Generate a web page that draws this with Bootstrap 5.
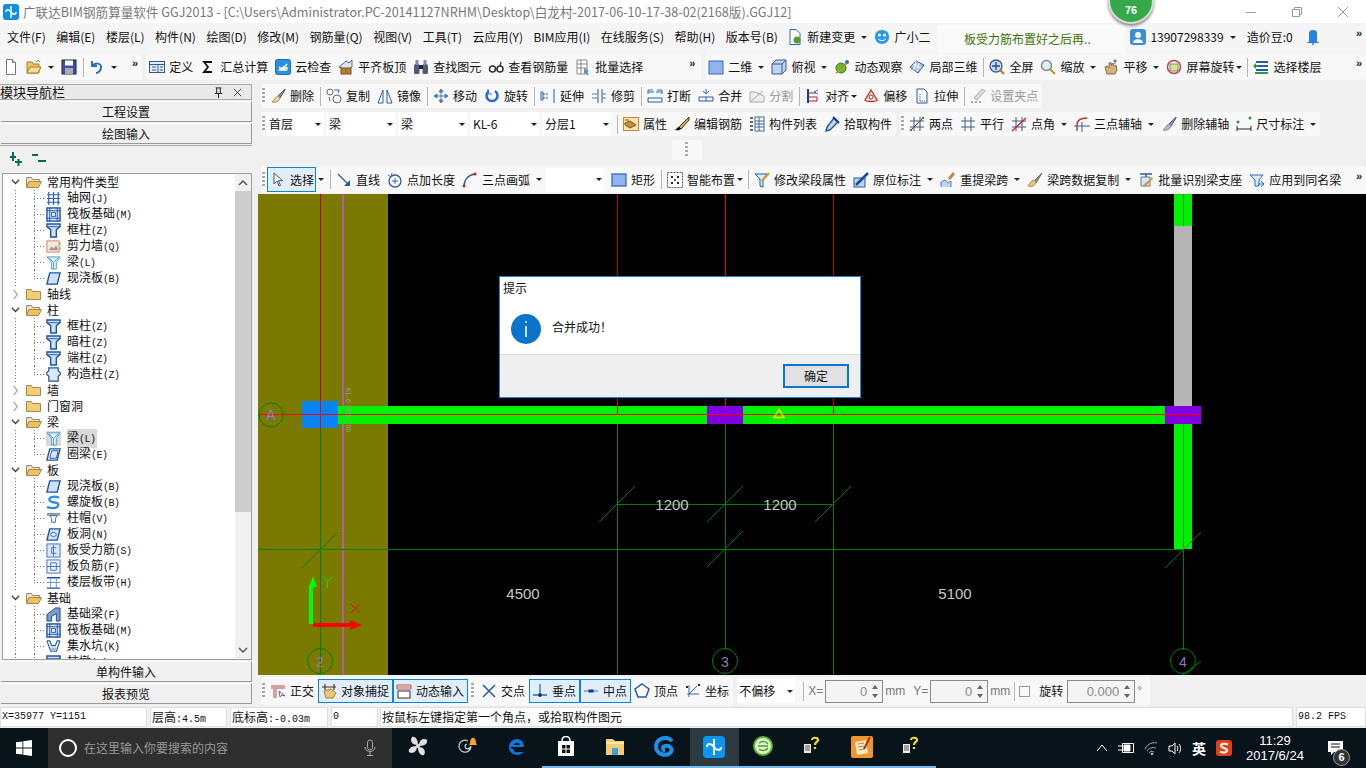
<!DOCTYPE html>
<html lang="zh-CN">
<head>
<meta charset="UTF-8" />
<title>广联达BIM钢筋算量软件 GGJ2013</title>
<link href="https://cdn.jsdelivr.net/npm/bootstrap@5.3.0/dist/css/bootstrap.min.css" rel="stylesheet" />
<style>
  html, body { height: 768px; overflow: hidden; }
  body { background: #f0f0f0; color: #111; font: 12px/16px "Noto Sans CJK SC", sans-serif; }
  svg { display: block; flex: none; }
  .app-title { height: 23px; background: #fff; color: #777; font-size: 12.6px; white-space: nowrap; }
  .app-title .logo { margin: 0 4px 0 3px; }
  .win-ctl { width: 46px; }
  .score-ball { position: absolute; left: 1108px; top: -22px; width: 46px; height: 46px; border-radius: 50%; background: #35a94a; border: 2px solid #d8dcd8; box-shadow: 0 2px 3px #888; color: #fff; font: bold 11px/14px "Liberation Sans", sans-serif; text-align: center; padding-top: 23px; }
  .menu-row { height: 31px; background: #f5f5f5; padding: 0 0 3px 7px; }
  .menu-row .mi { margin-right: 10.5px; white-space: nowrap; }
  .menu-row .mi.tail { margin-right: 6.5px; }
  .msg-box { width: 188px; height: 28px; background: #fafafa; border-radius: 3px 3px 0 0; color: #3f7206; text-align: center; line-height: 28px; margin: 3px 2px 0 3px; padding-right: 8px; }
  .tbar { background: #f8f8f8; border-radius: 3px; display: flex; align-items: center; white-space: nowrap; }
  .tb-item { display: flex; align-items: center; gap: 4px; padding: 0 4px 0 3px; height: 24px; }
  .tb-off { color: #999; }
  .tb-on { background: #e1eefa; outline: 1px solid #0a84d8; outline-offset: -1px; height: 25px; padding: 0 2px 0 3px; }
  .tb-caret { width: 0; height: 0; border: 3px solid transparent; border-top: 3px solid #222; border-bottom: 0; margin: 0 4px 0 2px; flex: none; }
  .tb-caret.snug { margin-left: -2px; margin-right: 3px; }
  .tb-sep { width: 1px; height: 19px; background: #b5b5b5; margin: 0 2px; flex: none; }
  .tb-grip { width: 3px; height: 16px; margin: 0 2px 0 1px; flex: none; background: repeating-linear-gradient(to bottom, #a8a8a8 0 2px, transparent 2px 4px); }
  .tb-grip.wide { margin: 0 4px 0 3px; }
  .tb-more { color: #222; font: bold 11px/12px "Liberation Sans", sans-serif; margin-top: -8px; }
  .tb-more.near { margin-left: 11px; margin-right: 4px; }
  .tb-more.far { margin-left: 42px; margin-right: 6px; }
  .row-top { height: 30px; }
  .row-top .tbar { height: 26px; }
  .pick { height: 24px; background: #fff; display: flex; align-items: center; justify-content: space-between; padding: 0 2px; }
  .pick.w56 { width: 56px; } .pick.w68 { width: 68px; } .pick.w58 { width: 58px; }
  .side { width: 258px; flex: none; padding-right: 6px; }
  .side-head { height: 16px; background: #e9e9e9; border: 1px solid #a9a9a9; border-left: 0; line-height: 14px; font-size: 13px; margin-bottom: 1px; }
  .side-btn { height: 21px; line-height: 19px; margin: 0 0 1px 1px; border: 0; border-top: 1px solid #fff; border-bottom: 1px solid #999; border-right: 1px solid #999; border-radius: 0; background: #f0f0f0; padding: 0; font-size: 12px; color: #111; text-align: center; }
  .side-tools { height: 28px; background: #f0f0f0; border-top: 1px solid #aaa; padding: 5px 0 0 7px; }
  .tree-box { height: 487px; margin: 0 0 1px 2px; background: #fff; border: 1px solid #a0a0a0; overflow: hidden; }
  .tree-list { width: 232px; overflow: hidden; }
  .node { height: 16px; display: flex; align-items: center; white-space: nowrap; background-repeat: no-repeat; }
  .node.dad { padding-left: 7px; }
  .node.kid { padding-left: 43px;
    background-image: repeating-linear-gradient(to bottom, #777 0 1px, transparent 1px 3px), repeating-linear-gradient(to bottom, #777 0 1px, transparent 1px 3px), repeating-linear-gradient(to right, #777 0 1px, transparent 1px 3px);
    background-size: 1px 100%, 1px 100%, 11px 1px; background-position: 12px 0, 31px 0, 31px 8px; }
  .node.kid.end { background-size: 1px 100%, 1px 8px, 11px 1px; }
  .node .name { margin-left: 6px; padding-right: 2px; }
  .node.dad .name { margin-left: 5px; }
  .node.sel .name { background: #d9d9d9; }
  .node.sel svg { background: #d9d9d9; }
  .node .code { font: 10px/16px "Liberation Mono", monospace; letter-spacing: -.55px; }
  .chev { width: 11px; margin-right: 1px; }
  .tree-scroll { width: 16px; background: #f0f0f0; height: 100%; }
  .scroll-up { height: 17px; }
  .scroll-thumb { height: 321px; background: #cdcdcd; }
  .scroll-gap { height: 131px; }
  .scroll-down { height: 14px; }
  .draw-side { flex: 1; min-width: 0; }
  .strip { padding-left: 3px; }
  .handle-box { width: 30px; height: 20px; background: #f8f8f8; margin-left: 414px; display: flex; justify-content: center; align-items: center; border-radius: 3px; }
  .draw-strip { height: 28px; margin-top: 6px; padding-left: 3px; }
  .draw-strip .tbar { height: 27px; }
  .cad { width: 1108px; height: 481px; background: #000; position: relative; }
  .cad text { font-family: "Liberation Sans", sans-serif; }
  .tip-box { position: absolute; left: 241px; top: 82px; width: 362px; height: 122px; background: #fff; border: 1px solid #1a82d8; }
  .tip-title { padding: 3px 3px 0; height: 26px; }
  .tip-body { height: 51px; padding-left: 11px; gap: 11px; }
  .tip-text { margin-bottom: 4px; }
  .tip-foot { height: 43px; background: #efefef; border-top: 1px solid #dcdcdc; padding: 9px 11px 0 0; }
  .tip-ok { width: 66px; height: 24px; background: #e1e1e1; border: 2px solid #0a78d0; border-radius: 0; padding: 0; font-size: 12px; line-height: 18px; color: #111; }
  .snap-bar { height: 31px; padding-left: 3px; }
  .snap-bar .tbar { height: 28px; margin-top: 2px; }
  .snap-bar .tb-on { height: 24px; padding: 0 4px 0 3px; }
  .field { width: 58px; height: 23px; border: 1px solid #8a8a8a; background: #f4f4f4; color: #8a8a8a; text-align: right; display: flex; justify-content: flex-end; align-items: center; gap: 4px; padding-right: 4px; margin: 0 2px; font: 13px "Liberation Sans", sans-serif; }
  .field.wide { width: 68px; margin-left: 4px; }
  .field svg { margin-left: 1px; }
  .unit { color: #777; font-family: "Liberation Sans", sans-serif; font-size: 12px; }
  .tick-box { width: 11px; height: 11px; border: 1px solid #999; margin: 0 9px 0 0; }
  .state-bar { height: 22px; padding: 1px 0; font: 10px/18px "Liberation Mono", monospace; gap: 3px; white-space: nowrap; }
  .cell { background: #fff; border: 1px solid #ddd; padding-left: 1px; height: 20px; overflow: hidden; flex: none; }
  .cell.wa { width: 147px; } .cell.wb { width: 77px; } .cell.wc { width: 98px; } .cell.wd { width: 47px; } .cell.we { width: 70px; }
  .cell.hanzi { font: 12px/18px "Noto Sans CJK SC", sans-serif; padding-left: 1px; flex: 1; margin-left: -1px; }
  .han { font: 12px/18px "Noto Sans CJK SC", sans-serif; }
  .task-bar { height: 40px; background: #08131a; color: #fff; position: relative; }
  .start-btn { width: 48px; }
  .find-box { width: 344px; height: 100%; background: #2f2f2f; color: #999; padding-left: 11px; font-size: 12px; gap: 7px; }
  .task-row { padding-left: 2px; }
  .task-ico { width: 49.3px; height: 100%; display: flex; align-items: center; justify-content: center; border-bottom: 2px solid transparent; }
  .task-ico.open { border-bottom-color: #76b9ed; }
  .task-ico.now { background: #2d3a42; border-bottom-color: #76b9ed; }
  .tray { color: #fff; gap: 10px; margin-right: 8px; }
  .tray-char { font-size: 14px; font-weight: 700; }
  .clock { text-align: center; width: 70px; font: 13px/15px "Liberation Sans", sans-serif; margin-right: 17px; }
  .note-slot { width: 39px; }
  .note-mark { position: absolute; right: 16px; bottom: 2px; width: 17px; height: 17px; border-radius: 50%; background: #333; color: #fff; font: bold 11px/15px "Liberation Sans", sans-serif; text-align: center; border: 1px solid #999; }
</style>
</head>
<body>
<div class="position-relative overflow-hidden">
  <div class="app-title d-flex align-items-center">
    <span id="logoSlot" class="logo"></span>
    <span class="flex-grow-1">广联达BIM钢筋算量软件 GGJ2013 - [C:\Users\Administrator.PC-20141127NRHM\Desktop\白龙村-2017-06-10-17-38-02(2168版).GGJ12]</span>
    <span class="win-ctl d-flex justify-content-center"><svg width="10" height="10" viewBox="0 0 10 10"><path d="M0 5.5h10" stroke="#999"/></svg></span>
    <span class="win-ctl d-flex justify-content-center"><svg width="10" height="10" viewBox="0 0 10 10"><path d="M.5 2.5h7v7h-7zM2.5 2.5v-2h7v7h-2" fill="none" stroke="#999"/></svg></span>
    <span class="win-ctl d-flex justify-content-center"><svg width="10" height="10" viewBox="0 0 10 10"><path d="M0 0l10 10M10 0L0 10" stroke="#999"/></svg></span>
  </div>
  <div class="score-ball">76</div>

  <div id="menuRow" class="menu-row d-flex align-items-center"></div>
  <div id="topRow" class="row-top d-flex"></div>

  <div class="d-flex">
    <div class="side">
      <div class="side-head d-flex justify-content-between align-items-center"><span>模块导航栏</span><span class="d-flex gap-2 pe-2" id="pinSlot"></span></div>
      <div class="d-grid">
        <button class="side-btn">工程设置</button>
        <button class="side-btn">绘图输入</button>
      </div>
      <div class="side-tools d-flex gap-2" id="plusSlot"></div>
      <div class="tree-box d-flex">
        <div class="tree-list" id="tree"></div>
        <div class="tree-scroll">
          <div class="scroll-up d-flex justify-content-center align-items-center" id="upSlot"></div>
          <div class="scroll-thumb"></div>
          <div class="scroll-gap"></div>
          <div class="scroll-down d-flex justify-content-center align-items-center" id="downSlot"></div>
        </div>
      </div>
      <div class="d-grid">
        <button class="side-btn">单构件输入</button>
        <button class="side-btn">报表预览</button>
      </div>
    </div>

    <div class="draw-side">
      <div class="strip d-flex"><div class="tbar" id="rowEdit"></div></div>
      <div class="strip d-flex gap-1 mt-1"><div class="tbar" id="rowPick"></div><div class="tbar" id="rowAxis"></div></div>
      <div class="handle-box mt-1"><span class="tb-grip"></span></div>
      <div class="draw-strip d-flex"><div class="tbar flex-grow-1" id="rowDraw"></div></div>
      <div class="cad">
        <svg width="1108" height="481" viewBox="258 194 1108 481" shape-rendering="crispEdges">
          <rect x="258" y="194" width="130" height="481" fill="#7a7a00"/>
          <rect x="1174" y="194" width="18" height="355" fill="#00f000"/>
          <rect x="1174" y="226" width="18" height="180" fill="#b4b4b4"/>
          <path d="M1183 194v32" stroke="#008000"/>
          <path d="M342.5 194v481" stroke="#b060a0" stroke-width="2"/>
          <rect x="338" y="406" width="840" height="18" fill="#00f000"/>
          <path d="M320.5 194V414M617.5 194V414M833.5 194V414" stroke="#c00000"/>
          <path d="M725.5 194V414" stroke="#f00000"/>
          <path d="M320.5 414V675M617.5 424V675M725.5 424V650M833.5 424V675M1183.5 424V650M258 549.5H1183M617 504.5H833" stroke="#008000" fill="none"/>
          <rect x="302" y="401" width="36" height="27" fill="#0a84f0"/>
          <rect x="707" y="406" width="36" height="18" fill="#8000e0"/>
          <rect x="1165" y="406" width="36" height="18" fill="#8000e0"/>
          <path d="M258 414.5H1201" stroke="#ff0000"/>
          <path d="M320.5 401V428" stroke="#ff0000"/>
          <g shape-rendering="auto" stroke="#008000" fill="none">
            <path d="M599 522l36-36M707 522l36-36M815 522l36-36M302 568l36-36M707 567l36-36M1165 568l36-36M1183 675l18-14"/>
            <circle cx="271" cy="415" r="12"/>
            <circle cx="320" cy="661" r="12.5"/>
            <circle cx="725" cy="661" r="12.5"/>
            <circle cx="1183" cy="661" r="12.5"/>
            <path d="M774 417.5l5-8 5 8z" stroke="#f0f000" stroke-width="1.5"/>
            <path d="M351 604l9 9M360 604l-9 9" stroke="#f00000"/>
            <path d="M323 577l4.500 4 4.500-4M327.500 581v7" stroke="#00f000"/>
          </g>
          <path d="M311 624V586" stroke="#00ff00" stroke-width="4"/>
          <path d="M313 576l-4 11h8z" fill="#00ff00" shape-rendering="auto"/>
          <path d="M313 625h38" stroke="#ff0000" stroke-width="4"/>
          <path d="M350 620l12 5-12 5z" fill="#ff0000" shape-rendering="auto"/>
          <g shape-rendering="auto" fill="#a8a8b8" text-anchor="middle" font-size="14">
            <text x="271" y="420" fill="#8a80d0">A</text>
            <text x="320" y="667" fill="#8a80b0">2</text>
            <text x="725" y="667" fill="#8a80b0">3</text>
            <text x="1183" y="667" fill="#8a80b0">4</text>
          </g>
          <g shape-rendering="auto" fill="#c8c8c8" text-anchor="middle" font-size="15">
            <text x="672" y="510">1200</text>
            <text x="780" y="510">1200</text>
            <text x="523" y="599">4500</text>
            <text x="955" y="599">5100</text>
          </g>
          <text x="346" y="388" transform="rotate(90 346 388)" font-size="7" fill="#9a9a9a" shape-rendering="auto">KL-6 300×700</text>
        </svg>
        <div class="tip-box">
          <div class="tip-title">提示</div>
          <div class="tip-body d-flex align-items-center">
            <svg width="30" height="30" viewBox="0 0 30 30"><circle cx="15" cy="15" r="15" fill="#0a74cc"/><path d="M15 7v1.800M15 12v11" stroke="#fff" stroke-width="1.600"/></svg>
            <span class="tip-text">合并成功！</span>
          </div>
          <div class="tip-foot d-flex justify-content-end"><button class="btn tip-ok">确定</button></div>
        </div>
      </div>
      <div class="snap-bar d-flex gap-1"><div class="tbar" id="rowSnap"></div><div class="tbar" id="rowCoord"></div></div>
    </div>
  </div>

  <div class="state-bar d-flex">
    <div class="cell wa">X=35977 Y=1151</div>
    <div class="cell wb"><span class="han">层高</span>:4.5m</div>
    <div class="cell wc"><span class="han">底标高</span>:-0.03m</div>
    <div class="cell wd">0</div>
    <div class="cell hanzi">按鼠标左键指定第一个角点，或拾取构件图元</div>
    <div class="cell we">98.2 FPS</div>
  </div>

  <div class="task-bar d-flex align-items-center">
    <div class="start-btn d-flex justify-content-center"><svg width="16" height="16" viewBox="0 0 16 16" fill="#fff"><path d="M0 2.300l6.500-.9v6.200H0zM7.300 1.300L16 0v7.600H7.300zM0 8.400h6.500v6.200L0 13.700zM7.300 8.400H16V16l-8.700-1.300z"/></svg></div>
    <div class="find-box d-flex align-items-center">
      <svg width="18" height="18" viewBox="0 0 18 18"><circle cx="9" cy="9" r="8" fill="none" stroke="#fff" stroke-width="2"/></svg>
      <span class="flex-grow-1">在这里输入你要搜索的内容</span>
      <svg class="me-3" width="12" height="18" viewBox="0 0 12 18" fill="none" stroke="#aaa"><rect x="3.500" y="1" width="5" height="10" rx="2.500"/><path d="M1 8c0 6 10 6 10 0M6 13v3M3 16.500h6"/></svg>
    </div>
    <div class="task-row d-flex h-100 flex-grow-1" id="taskIcons"></div>
    <div class="tray d-flex align-items-center" id="trayIcons"></div>
    <div class="clock">11:29<br>2017/6/24</div>
    <div class="note-slot h-100 d-flex align-items-center">
      <svg width="18" height="18" viewBox="0 0 18 18"><path d="M1 2h15v11H7l-3 3v-3H1z" fill="#fff"/><path d="M4 5h9M4 8h9" stroke="#08131a"/></svg>
    </div>
    <div class="note-mark">6</div>
  </div>
</div>

<script>
  // icon drawings, all on a 16x16 box
  const brush = (c) => `<path d="M15 1L8 8l2 2 5-8z" fill="#8a8ad0" stroke="#556"/><path d="M8 8c-3 1-3 4-6 6 4 1 7-1 8-4z" fill="${c}" stroke="#a86"/>`;
  const colT = `<path d="M1 1h14v3l-4 3v8H5V7L1 4z" fill="#cfe0f7" stroke="#1c55a8" stroke-width="1.500"/><path d="M1 4h14" stroke="#1c55a8"/>`;
  const slab = `<path d="M4 2h11l-3 12H1z" fill="#cfe0f7" stroke="#1c55a8" stroke-width="1.500"/>`;
  const grid = `<path d="M3 1v14M8 1v14M13 1v14M1 4h14M1 8h14M1 12h14" stroke="#2a62b8" stroke-width="1.300" fill="none"/>`;
  const raft = `<rect x="1" y="1" width="14" height="14" fill="#dbe8fa" stroke="#1c55a8" stroke-width="1.500"/><path d="M4 1v14M12 1v14M1 4h14M1 12h14" stroke="#1c55a8"/><rect x="6" y="6" width="4" height="4" fill="#fff" stroke="#1c55a8"/>`;
  const icons = {
    logo: `<rect width="16" height="16" rx="3" fill="#0a8ee8"/><path d="M8 2v12M3 8c0-3 3-3 5 0s5 3 5 0" stroke="#fff" fill="none" stroke-width="1.500"/>`,
    doc: `<path d="M3.500.5h6l3 3v12h-9z" fill="#fff" stroke="#777"/><path d="M9.500.5v3h3" fill="#ddd" stroke="#777"/>`,
    open: `<path d="M1 14V3h5l1 2h6v9z" fill="#e8c46a" stroke="#a87d20"/><path d="M1 14l3-6h11l-3 6z" fill="#f5dc94" stroke="#a87d20"/><path d="M10 3c1-2 3-2 4 0" stroke="#3a70c0" fill="none"/>`,
    save: `<rect x="1" y="1" width="14" height="14" fill="#3d4ea8" stroke="#223"/><rect x="4" y="1.500" width="8" height="5" fill="#fff"/><rect x="4" y="9" width="8" height="6" fill="#aab"/>`,
    undo: `<path d="M3 2v5h5M3.500 7C6 3 13 4 12 9c-.5 3-3 5-5 5" fill="none" stroke="#2a6ac8" stroke-width="2"/>`,
    form: `<rect x=".5" y="2.500" width="15" height="11" fill="#e4eefb" stroke="#2a5a9a"/><path d="M1 5.500h14M9 6v7M3 8h4M3 11h4M11 8h3M11 11h3" stroke="#2a5a9a"/>`,
    sum: `<path d="M12 3H4l4 5-4 5h8" fill="none" stroke="#111" stroke-width="1.800"/>`,
    cloud: `<rect x=".5" y=".5" width="15" height="15" rx="2" fill="#2a90e0" stroke="#1a70c0"/><path d="M3 12c2-5 8-6 10-3l-1 3z" fill="#cfe7fb"/><path d="M4 8l3 3 5-6" fill="none" stroke="#fff" stroke-width="1.500"/>`,
    level: `<path d="M1 8l7-6 3 2 3-3v7l-5 3z" fill="#dbe4f2" stroke="#4a6a9a"/><rect x="3" y="9" width="10" height="6" fill="#c97a28" stroke="#8a4a10"/><path d="M8 9v6" stroke="#4a9a40" stroke-width="2"/>`,
    binoc: `<rect x="1" y="5" width="5.500" height="10" rx="1.500" fill="#4a5a80"/><rect x="9.500" y="5" width="5.500" height="10" rx="1.500" fill="#4a5a80"/><rect x="2.500" y="1" width="3" height="5" fill="#7c8cae"/><rect x="10.500" y="1" width="3" height="5" fill="#7c8cae"/><rect x="6" y="6" width="4" height="4" fill="#223"/>`,
    glass: `<circle cx="4.500" cy="10" r="3" fill="none" stroke="#333" stroke-width="1.500"/><circle cx="12" cy="10" r="3" fill="none" stroke="#333" stroke-width="1.500"/><path d="M7.500 10h1.500M12 7l1-4" stroke="#333" stroke-width="1.300"/>`,
    batch: `<path d="M2 1h10v14H2z" fill="#fff" stroke="#888"/><path d="M2 5h10M2 9h10M6 1v14" stroke="#888"/><path d="M9 9l5 3-2 1 2 3-2 0-1-2-2 1z" fill="#5a90d0"/>`,
    box2d: `<rect x="1" y="2" width="14" height="13" fill="#8fb4ee" stroke="#3a6ab8"/>`,
    cube: `<path d="M1 5l4-4h10v10l-4 4H1z" fill="#bcd4f2" stroke="#3a5a8a"/><path d="M1 5h10v10M11 5l4-4" fill="none" stroke="#3a5a8a"/>`,
    orb: `<circle cx="7" cy="9" r="5" fill="#6ab83a" stroke="#3a7a1a"/><path d="M2 14C5 12 11 7 14 2" stroke="#b8a020" stroke-width="2"/><circle cx="13" cy="3" r="2" fill="#3a70c0"/>`,
    part3: `<path d="M1 8l6-6 8 4-6 8z" fill="#a8c4ea" stroke="#3a5a8a"/><path d="M4 5l8 4M7 2l-2 9M10 4l-2 9" stroke="#fff"/>`,
    fit: `<circle cx="7" cy="7" r="6" fill="#c8daf2" stroke="#3a5a8a" stroke-width="1.300"/><path d="M7 3v8M3 7h8" stroke="#1a4a9a" stroke-width="1.300"/><path d="M11 11l4 4" stroke="#b87a10" stroke-width="2"/>`,
    zoom: `<circle cx="6.500" cy="6.500" r="5" fill="#e4ecf5" stroke="#7a8a9a" stroke-width="1.500"/><path d="M10 10l5 5" stroke="#b89a30" stroke-width="2.200"/>`,
    hand: `<path d="M4 15L2 8l2-1 2 2V4l2-.5.5 3L10 4l1 3 2-1 1 5-2 4z" fill="#d8b070" stroke="#866"/><path d="M12 0v5M10 2h4" stroke="#667"/>`,
    spin: `<circle cx="8" cy="8" r="6.500" fill="none" stroke="#d84030" stroke-width="1.500"/><rect x="4" y="5" width="8" height="7" fill="#d8e870" stroke="#5a90d0"/>`,
    floors: `<path d="M3 3h12M3 7h12M3 11h12" stroke="#2a5aa8" stroke-width="2"/><path d="M0 7l3-3v2h2v2H3v2z" fill="#2a9a40"/><path d="M2 14h13" stroke="#2a9a40" stroke-width="2"/>`,
    rub: brush("#e8d8a0"),
    copy: `<circle cx="4" cy="4" r="3" fill="none" stroke="#667"/><circle cx="11" cy="11" r="4" fill="none" stroke="#667"/><path d="M8 2h5l-1 3M3 9l1 4" stroke="#2a6ac8" fill="none"/>`,
    mirror: `<path d="M6 2L1 15h5zM10 2l5 13h-5z" fill="#fff" stroke="#2a5a9a"/>`,
    move: `<path d="M8 1v14M1 8h14M8 1L6 4h4zM8 15l-2-3h4zM1 8l3-2v4zM15 8l-3-2v4z" fill="#4a80b8" stroke="#4a80b8"/>`,
    turn: `<path d="M11 3a5.500 5.500 0 1 1-6 0" fill="none" stroke="#2a6ac8" stroke-width="2.500"/><path d="M4 1v5h4" fill="none" stroke="#2a6ac8"/>`,
    stretch: `<path d="M1 4h2v8H1zM14 1v14" stroke="#2a5a9a" fill="none"/><path d="M3 6h6M3 10h6" stroke="#2a5a9a" stroke-dasharray="2 1"/>`,
    trim: `<path d="M7 1v14M11 1v14" stroke="#2a5a9a"/><path d="M1 6h6M1 10h6M11 6h4M11 10h4" stroke="#778"/>`,
    cut: `<path d="M1 6V2h5M15 6V2h-5M1 4h6M9 4h6" stroke="#2a6ac8" fill="none"/><path d="M1 10h14v4H1z" fill="none" stroke="#2a5a9a"/>`,
    join: `<path d="M8 1v4M5 3l3 3 3-3" stroke="#2a6ac8" fill="none"/><path d="M1 9h14v4H1z" fill="none" stroke="#2a5a9a"/><path d="M8 9v4" stroke="#2a5a9a"/>`,
    split: `<path d="M1 14l13-11M1 14h14V8L6 4H1z" fill="#eee" stroke="#aaa"/>`,
    align: `<path d="M3 1v14" stroke="#1a3a9a" stroke-width="2"/><path d="M4 5h7M4 13h8v-4H4" stroke="#b02020" fill="none"/><path d="M13 2L9 4l4 2" stroke="#2a6ac8" fill="none"/>`,
    shift: `<path d="M8 2l6 10c0 2-12 2-12 0z" fill="#fbd8d0" stroke="#c83020" stroke-width="1.300"/><circle cx="8" cy="9" r="2" fill="#fff" stroke="#556"/>`,
    pull: `<path d="M3 1h7l3 3v11H3z" fill="#fff" stroke="#2a5a9a"/><path d="M6 6v7M6 13h5" stroke="#2a5a9a" stroke-dasharray="1 1"/>`,
    grip: `<path d="M12 1l3 2-8 9-3-2z" fill="#ddd" stroke="#aaa"/><path d="M1 14h2M5 14h2M9 14h2" stroke="#aaa" stroke-width="2"/>`,
    prop: `<rect x=".5" y="1.500" width="15" height="13" fill="#fbe2b8" stroke="#d8852a"/><path d="M2 4h4M2 7l5-2 6 4-6 3-5-3z" fill="#c89028" stroke="#7a5a20"/>`,
    edit: `<path d="M15 1L5 11l2 2L15 4z" fill="#e8b030" stroke="#333"/><path d="M1 14c2-2 3-3 4-3l2 2c-2 2-4 1-6 1z" fill="#111"/>`,
    list: `<path d="M1 2h3M1 6h3M1 10h3M1 14h3" stroke="#667" stroke-width="2"/><rect x="6" y="1" width="9" height="14" fill="#fff" stroke="#3a6a9a"/><path d="M6 5h9M6 8h9M6 11h9M10 1v14" stroke="#3a6a9a"/>`,
    dropper: `<path d="M10 2l4 4-8 8-4 1 1-4z" fill="#bcd6f4" stroke="#1a4a9a" stroke-width="1.300"/><path d="M9 1l6 6" stroke="#1a3a8a" stroke-width="2"/>`,
    twoPt: `<path d="M1 5h14M1 11h14M5 1v14M11 1v14" stroke="#3a5a8a"/><path d="M1 15L15 1" stroke="#b82020"/><circle cx="2" cy="14" r="1.300" fill="#2a9a40"/><circle cx="14" cy="2" r="1.300" fill="#2a9a40"/>`,
    para: `<path d="M1 5h14M1 11h14M5 1v14M11 1v14" stroke="#3a5a8a"/>`,
    ptAng: `<path d="M1 5h14M1 11h14M5 1v14M11 1v14" stroke="#3a5a8a"/><path d="M1 15L15 2" stroke="#d02020" stroke-width="1.300"/>`,
    arcAxis: `<path d="M3 15V9c0-5 4-7 10-7" fill="none" stroke="#d02020" stroke-width="1.300"/><path d="M0 10h16M8 6v10" stroke="#3a5a8a"/>`,
    delAxis: brush("#c8a8e0"),
    dim: `<circle cx="2" cy="6" r="1.500" fill="#2a9a40"/><circle cx="14" cy="2" r="1.500" fill="#2a9a40"/><path d="M1 10v5M15 10v5M1 13h14" stroke="#223"/>`,
    arrow: `<path d="M4 1v11l3-3 2 5 1.500-.6-2-4.800h4z" fill="#fff" stroke="#456"/>`,
    line: `<path d="M2 2l11 11" stroke="#2a5a9a" stroke-width="1.300"/><path d="M14 14H8l6-6z" fill="#2a5a9a"/>`,
    plusLen: `<circle cx="8" cy="9" r="6" fill="none" stroke="#3a5a8a" stroke-width="1.300"/><path d="M8 6v6M5 9h6" stroke="#2a6ac8"/><path d="M1 3l3 2 1-4" stroke="#2a6ac8" fill="none"/>`,
    arc3: `<path d="M2 15C2 8 6 3 13 2" fill="none" stroke="#2a5a9a" stroke-width="1.500"/><circle cx="2" cy="14" r="1.500" fill="#d02020"/><circle cx="13" cy="2" r="1.500" fill="#d02020"/>`,
    rect: `<rect x="1" y="2" width="14" height="12" fill="#8fb4ee" stroke="#3a6ab8" stroke-width="1.300"/>`,
    smart: `<rect x=".5" y=".5" width="15" height="15" fill="#fff" stroke="#555" stroke-dasharray="2 1"/><path d="M4 4h2v2H4zM10 4h2v2h-2zM4 10h2v2H4zM10 10h2v2h-2z" fill="#223"/><rect x="7" y="7" width="2" height="2" fill="#2a6ac8"/>`,
    beamEd: `<path d="M1 2h12l-4 5v8l-3-1V7z" fill="#dcebfb" stroke="#1a5aa8"/><path d="M15 1L8 9" stroke="#d0a020" stroke-width="2"/>`,
    inPlace: `<rect x="1" y="6" width="11" height="9" fill="#bcd4f0" stroke="#2a5a9a"/><path d="M15 1L5 11l-2 2" stroke="#1a4a9a" stroke-width="2.500"/>`,
    respan: `<path d="M1 15V10l4-2 3 3 3-2v6" fill="#bcd4f0" stroke="#5a80b0"/><path d="M14 1l-5 6" stroke="#b88a5a" stroke-width="3"/>`,
    copySpan: `<path d="M15 1L7 9l2 2z" fill="#999" stroke="#666"/><path d="M7 8c-3 1-4 3-6 6 4 1 7 0 8-4z" fill="#e8c868" stroke="#a86"/>`,
    detect: `<path d="M2 2h12M8 2v3" stroke="#2a5a9a" stroke-width="1.500"/><path d="M3 5h9v9H3z" fill="#dde8f6" stroke="#5a7a9a"/><path d="M5 13l9-8 1 2-8 8z" fill="#c8a050"/>`,
    sameName: `<path d="M1 3h13l-4 5v6H6V8z" fill="#dcebfb" stroke="#2a6ab8"/><path d="M9 12h6M12 9l3 3-3 3" fill="none" stroke="#2a6ab8"/>`,
    ortho: `<path d="M1 2h14v4H7v9H3V6H1z" fill="#d8a0a0"/><path d="M9 8l1 6 2-2 3 1z" fill="#fff" stroke="#667"/>`,
    snap: `<path d="M4 1v6M13 1v6" stroke="#a03020" stroke-width="1.300"/><path d="M1 4h14" stroke="#333"/><path d="M3 8l7-2 5 4-3 5-7 0z" fill="#e8c878" stroke="#a87d30"/>`,
    dyn: `<path d="M1 2h14v4H1z" fill="#fff" stroke="#b05050"/><path d="M1 4h14" stroke="#b05050"/><rect x="2" y="8" width="12" height="7" fill="#fff" stroke="#333"/>`,
    cross: `<path d="M2 2l12 12M14 2L2 14" stroke="#2a5a9a" stroke-width="1.500"/>`,
    perp: `<path d="M8 1v13M1 12h14" stroke="#2a6ab8" stroke-width="1.300"/><rect x="6.500" y="10.500" width="3" height="3" fill="#123"/>`,
    mid: `<path d="M1 8h14" stroke="#6a8ac8" stroke-width="1.300"/><rect x="5.500" y="6.500" width="5" height="3" fill="#123a8a"/>`,
    apex: `<path d="M8 1l7 5-3 8H4L1 6z" fill="#fff" stroke="#2a5a9a" stroke-width="1.500"/>`,
    axes: `<path d="M4 2v12M2 11h12M4 11l8-8" stroke="#2a6ab8" fill="none"/><path d="M1 3l2 2M3 3L1 5M13 1l2 2M15 1l-2 2" stroke="#223"/>`,
    tip: `<path d="M4 13V4a4 3 0 0 1 8 0v9h2v1H2v-1z" fill="#2a80e0"/><circle cx="8" cy="15" r="1" fill="#2a80e0"/>`,
    newCh: `<path d="M3 .5h6l4 4v11H3z" fill="#fff" stroke="#2a6ab8"/><circle cx="10" cy="11" r="3.500" fill="#4aa030"/>`,
    bot: `<path d="M8 1c5 0 7 3 7 7s-3 7-7 7-7-3-7-7 2-7 7-7z" fill="#2a9ae8"/><circle cx="5.500" cy="6" r="1.500" fill="#fff"/><circle cx="10.500" cy="6" r="1.500" fill="#fff"/><path d="M4 10c2 2 6 2 8 0" stroke="#fff" fill="none"/>`,
    user: `<rect width="16" height="16" rx="3" fill="#3a90d8"/><circle cx="8" cy="6" r="3" fill="#fff"/><path d="M3 14c0-5 10-5 10 0z" fill="#fff"/>`,
    folder: `<path d="M.5 13.500v-10h5l1 2h8v8z" fill="#f2cf72" stroke="#9a8a60"/>`,
    folderOpen: `<path d="M.5 13.500v-10h5l1 2h7v2" fill="#e8e0c8" stroke="#9a8a60"/><path d="M.5 13.500l2.500-6h12.500l-3 6z" fill="#f2c354" stroke="#9a8a60"/>`,
    colT, slab, grid, raft,
    wall: `<rect x="1" y="2" width="13" height="12" fill="#f5e8dc" stroke="#d08050"/><path d="M3 12l3-4 2 2 3-3 2 5z" fill="#999"/><path d="M15 4v2M15 9v2" stroke="#c85a10"/>`,
    beamL: `<path d="M1 2h14l-4 6v7H6V8z" fill="#e8f2fb" stroke="#4a9ad8"/><path d="M3 3l5 5 5-5M8 8v7" stroke="#4a9ad8" fill="none"/>`,
    hollow: `<path d="M4 2h11l-3 12H1z" fill="#fff" stroke="#1c55a8" stroke-width="1.500"/><path d="M6 4h7l-2 8H4z" fill="#dbe8fa" stroke="#1c55a8"/>`,
    spiral: `<path d="M14 3C8 0 2 3 4 6s10 1 9 5-8 3-12 2" fill="none" stroke="#2a90e0" stroke-width="2.500"/>`,
    cap: `<path d="M1 2h14v3H1z" fill="#999"/><path d="M4 5h8l-2 3v4H6V8z" fill="#fff" stroke="#2a6ab8"/>`,
    hole: `<path d="M4 2h11l-3 12H1z" fill="#cfe0f7" stroke="#1c55a8" stroke-width="1.500"/><ellipse cx="8" cy="8" rx="3" ry="2" fill="#fff" stroke="#1c55a8"/>`,
    rebar: `<rect x="1" y="1" width="14" height="14" fill="#dbe8fa" stroke="#3a70c0"/><path d="M11 5H6v6h5M8 2v12" stroke="#3a70c0" fill="none"/>`,
    neg: `<rect x="1" y="1" width="14" height="14" fill="#eef4fc" stroke="#3a70c0"/><path d="M1 8h14M5 4h6v8H5z" stroke="#3a70c0" fill="none"/>`,
    band: `<path d="M1 3h14M1 14h14" stroke="#1c55a8" stroke-width="1.500"/><path d="M5 3v11M11 3v11M1 8h14" stroke="#6a90c8"/>`,
    fbeam: `<path d="M1 15V8l9-7h5v14h-4V7L6 10v5z" fill="#7a9ac8" stroke="#1c4a88"/>`,
    sump: `<path d="M1 2h3l2 5h4l2-5h3M1 2l4 11h6l4-11" fill="none" stroke="#2a5a9a" stroke-width="1.200"/><path d="M4 9h8l-2 4H6z" fill="#9ac0e8"/>`,
    pier: `<path d="M3 1h10v3l3 3-3 3v5H3v-5L0 7l3-3z" fill="#dbe8fa" stroke="#1c55a8" stroke-width="1.300"/>`,
    plus: `<path d="M3 6h6M6 1v9M8 11h7M11.500 8v7" stroke="#0a6a5a" stroke-width="2"/>`,
    minus: `<path d="M1 4h6M7 10h8" stroke="#0a6a5a" stroke-width="2"/>`,
    chevD: `<path d="M2 3l4 4 4-4" fill="none" stroke="#444" stroke-width="1.500"/>`,
    chevR: `<path d="M4 1l4 5-4 5" fill="none" stroke="#aaa" stroke-width="1.500"/>`,
    up: `<path d="M2 8l4-4 4 4" fill="none" stroke="#555" stroke-width="1.500"/>`,
    down: `<path d="M2 4l4 4 4-4" fill="none" stroke="#555" stroke-width="1.500"/>`,
    pin: `<path d="M3 1h6M4 1v6M8 1v6M2 7h8M6 7v5" stroke="#111"/>`,
    close: `<path d="M2 2l8 8M10 2l-8 8" stroke="#333"/>`,
    spinUD: `<path d="M3 0L0 4h6zM0 9l3 4 3-4z" fill="#666"/>`,
  };

  function svg(name, size = 16) {
    const box = ["chevD", "chevR", "up", "down", "pin", "close"].includes(name) ? 12 : 16;
    return `<svg width="${size}" height="${size}" viewBox="0 0 ${box} ${box}">${icons[name]}</svg>`;
  }

  // one toolbar entry: [icon, label, flags], flags: c = caret, t = snug caret, o = pressed, d = disabled
  function tbItem(item) {
    if (item === "|") return '<span class="tb-sep"></span>';
    if (item === ":") return '<span class="tb-grip"></span>';
    if (item === "::") return '<span class="tb-grip wide"></span>';
    if (item === ">") return '<span class="tb-more ms-auto me-1">»</span>';
    if (typeof item === "string") return item;
    const [icon, label, flags = ""] = item;
    const cls = (flags.includes("o") ? " tb-on" : "") + (flags.includes("d") ? " tb-off" : "");
    let out = `<span class="tb-item${cls}">${svg(icon)}${label ? `<span>${label}</span>` : ""}</span>`;
    if (flags.includes("c")) out += '<span class="tb-caret"></span>';
    if (flags.includes("t")) out += '<span class="tb-caret snug"></span>';
    return out;
  }
  function fill(id, items) {
    document.getElementById(id).innerHTML = items.map(tbItem).join("");
  }
  const pick = (text, w) => `<span class="pick ${w} me-1"><span>${text}</span><span class="tb-caret m-0"></span></span>`;

  document.getElementById("logoSlot").innerHTML = svg("logo");
  document.getElementById("pinSlot").innerHTML = svg("pin", 11) + svg("close", 11);
  document.getElementById("plusSlot").innerHTML = svg("plus") + svg("minus");
  document.getElementById("upSlot").innerHTML = svg("up", 12);
  document.getElementById("downSlot").innerHTML = svg("down", 12);

  const menus = ["文件(F)", "编辑(E)", "楼层(L)", "构件(N)", "绘图(D)", "修改(M)", "钢筋量(Q)", "视图(V)", "工具(T)", "云应用(Y)", "BIM应用(I)", "在线服务(S)", "帮助(H)"];
  document.getElementById("menuRow").innerHTML =
    menus.map((m) => `<span class="mi">${m}</span>`).join("") + '<span class="mi tail">版本号(B)</span>' +
    tbItem(["newCh", "新建变更", "c"]) + tbItem(["bot", "广小二"]) +
    '<span class="msg-box">板受力筋布置好之后再..</span>' +
    tbItem(["user", "13907298339", "c"]) + '<span class="tb-item ms-1">造价豆:0</span>' +
    `<span class="ms-2">${svg("tip")}</span>` + '<span class="tb-more ms-auto me-1">»</span>';

  document.getElementById("topRow").innerHTML =
    '<div class="tbar">' + [["doc"], ["open", "", "c"], ["save"], "|", ["undo", "", "c"], '<span class="tb-more near">»</span>'].map(tbItem).join("") + "</div>" +
    '<div class="tbar ms-1">' + [["form", "定义"], ["sum", "汇总计算"], ["cloud", "云检查"], ["level", "平齐板顶"], ["binoc", "查找图元"], ["glass", "查看钢筋量"], ["batch", "批量选择"], '<span class="tb-more far">»</span>'].map(tbItem).join("") + "</div>" +
    '<div class="tbar ms-1 flex-grow-1">' + [["box2d", "二维", "c"], ["cube", "俯视", "c"], ["orb", "动态观察"], ["part3", "局部三维"], "|", ["fit", "全屏"], ["zoom", "缩放", "c"], ["hand", "平移", "c"], ["spin", "屏幕旋转", "t"], "|", ["floors", "选择楼层"], ">"].map(tbItem).join("") + "</div>";

  fill("rowEdit", [":", ["rub", "删除"], "|", ["copy", "复制"], ["mirror", "镜像"], "|", ["move", "移动"], ["turn", "旋转"], "|", ["stretch", "延伸"], ["trim", "修剪"], "|", ["cut", "打断"], ["join", "合并"], ["split", "分割", "d"], "|", ["align", "对齐", "t"], ["shift", "偏移"], ["pull", "拉伸"], "|", ["grip", "设置夹点", "d"]]);
  fill("rowPick", [":", pick("首层", "w56"), pick("梁", "w68"), pick("梁", "w68"), pick("KL-6", "w68"), pick("分层1", "w68"), "|", ["prop", "属性"], ["edit", "编辑钢筋"], ["list", "构件列表"], ["dropper", "拾取构件"]]);
  fill("rowAxis", [":", ["twoPt", "两点"], ["para", "平行"], ["ptAng", "点角", "c"], ["arcAxis", "三点辅轴", "c"], ["delAxis", "删除辅轴"], ["dim", "尺寸标注", "c"]]);
  fill("rowDraw", [":", ["arrow", "选择", "o"], '<span class="tb-caret"></span>', "|", ["line", "直线"], ["plusLen", "点加长度"], ["arc3", "三点画弧", "c"], pick("", "w58"), ["rect", "矩形"], "|", ["smart", "智能布置", "t"], "|", ["beamEd", "修改梁段属性"], ["inPlace", "原位标注", "c"], ["respan", "重提梁跨", "c"], ["copySpan", "梁跨数据复制", "c"], ["detect", "批量识别梁支座"], ["sameName", "应用到同名梁"], ">"]);
  fill("rowSnap", [":", ["ortho", "正交"], ["snap", "对象捕捉", "o"], ["dyn", "动态输入", "o"], "::", ["cross", "交点"], ["perp", "垂点", "o"], ["mid", "中点", "o"], ["apex", "顶点"], ["axes", "坐标"]]);

  const spinner = `<svg width="6" height="13" viewBox="0 0 6 13">${icons.spinUD}</svg>`;
  document.getElementById("rowCoord").innerHTML =
    pick("不偏移", "w58") + '<span class="tb-sep mx-1"></span><span class="unit">X=</span>' +
    `<span class="field"><span>0</span>${spinner}</span><span class="unit">mm</span><span class="unit ms-2">Y=</span>` +
    `<span class="field"><span>0</span>${spinner}</span><span class="unit">mm</span><span class="tb-sep mx-1"></span>` +
    '<span class="tick-box"></span><span>旋转</span>' +
    `<span class="field wide"><span>0.000</span>${spinner}</span><span class="unit me-2">°</span>`;

  // the module tree: d = collapsed folder, o = open folder, k = child, e = last child, s = selected
  const tree = [
    ["o", "常用构件类型"], ["k", "grid", "轴网(J)"], ["k", "raft", "筏板基础(M)"], ["k", "colT", "框柱(Z)"], ["k", "wall", "剪力墙(Q)"], ["k", "beamL", "梁(L)"], ["e", "slab", "现浇板(B)"],
    ["d", "轴线"],
    ["o", "柱"], ["k", "colT", "框柱(Z)"], ["k", "colT", "暗柱(Z)"], ["k", "colT", "端柱(Z)"], ["e", "pier", "构造柱(Z)"],
    ["d", "墙"], ["d", "门窗洞"],
    ["o", "梁"], ["s", "beamL", "梁(L)"], ["e", "hollow", "圈梁(E)"],
    ["o", "板"], ["k", "slab", "现浇板(B)"], ["k", "spiral", "螺旋板(B)"], ["k", "cap", "柱帽(V)"], ["k", "hole", "板洞(N)"], ["k", "rebar", "板受力筋(S)"], ["k", "neg", "板负筋(F)"], ["e", "band", "楼层板带(H)"],
    ["o", "基础"], ["k", "fbeam", "基础梁(F)"], ["k", "raft", "筏板基础(M)"], ["k", "sump", "集水坑(K)"], ["k", "colT", "柱墩(Y)"],
  ];
  function nameHtml(label) {
    return label.replace(/\((.)\)/, '<span class="code">($1)</span>');
  }
  document.getElementById("tree").innerHTML = tree.map((n) => {
    if (n[0] === "o" || n[0] === "d") {
      const open = n[0] === "o";
      return `<div class="node dad"><span class="chev">${svg(open ? "chevD" : "chevR", 11)}</span><span class="me-1 d-inline-block"></span>${svg(open ? "folderOpen" : "folder", 16)}<span class="name">${n[1]}</span></div>`;
    }
    const cls = n[0] === "e" ? " end" : n[0] === "s" ? " sel" : "";
    return `<div class="node kid${cls}">${svg(n[1], 15)}<span class="name">${nameHtml(n[2])}</span></div>`;
  }).join("");

  // taskbar pictures
  const q = `<path d="M2 8h7v9H2z" fill="#eee"/><path d="M3 10h5M3 12h5M3 14h5" stroke="#555"/><path d="M10 4c0-3 6-3 6 0 0 2-3 2-3 5M13 11v2" fill="none" stroke="#f0e020" stroke-width="2.200"/>`;
  const task = [
    ["", `<circle cx="10" cy="10" r="2" fill="#ddd"/><path d="M10 9C3 9 2 4 4 1c3-1 6 2 6 8zM11 10c0-7 5-8 8-6 1 3-2 6-8 6zM10 11c7 0 8 5 6 8-3 1-6-2-6-8zM9 10c0 7-5 8-8 6-1-3 2-6 8-6z" fill="#e0e0e0"/>`],
    ["", `<path d="M14 10a6 6 0 1 1-3-5M10 8a2.500 2.500 0 1 0 3 3" fill="none" stroke="#ccc" stroke-width="1.200"/><path d="M13 7c0-7 6-7 6 0l1 2h-8z" fill="#f0a820"/>`],
    ["", `<path d="M4 11h14c0-5-3-8-7-8s-8 3-8 8 4 8 8 8c3 0 5-1 6-3h-5c-2 1-4 0-4-2z" fill="#0a78d8"/><path d="M8 9c0-3 6-3 6 0z" fill="#08131a"/>`],
    ["open", `<path d="M2 5h16v15H2z" fill="#fff"/><path d="M6 5c0-6 8-6 8 0" fill="none" stroke="#fff" stroke-width="1.500"/><path d="M6 9h3.500v3.500H6zM10.500 9H14v3.500h-3.500zM6 13.500h3.500V17H6zM10.500 13.500H14V17h-3.500z" fill="#111"/>`],
    ["open", `<path d="M1 3h7l2 2h9v14H1z" fill="#f2cf72"/><path d="M1 6h18v2H1z" fill="#fbe8a8"/><path d="M7 12h6v7H7z" fill="#3aa0e0"/>`],
    ["open", `<path d="M18 5C14 0 3 1 2 10c0 9 11 11 15 6 2-3-1-7-6-6-3 1-2 4 0 4" fill="none" stroke="#1a90e8" stroke-width="4"/>`],
    ["now", `<rect x="0" y="0" width="22" height="22" rx="4" fill="#0a96f0"/><path d="M11 3v16M4 11c0-4 4-4 7 0s7 4 7 0" fill="none" stroke="#fff" stroke-width="2"/>`],
    ["open", `<circle cx="10" cy="10" r="9" fill="#dff3d0" stroke="#5ab82a" stroke-width="2"/><path d="M5 10h10M6 7c3-2 7-2 9 1M6 13c3 2 7 2 9-1" stroke="#4aa020" stroke-width="1.500" fill="none"/>`],
    ["open", q],
    ["open", `<rect x="0" y="0" width="22" height="22" rx="2" fill="#f0962a"/><path d="M4 6l11-2 2 13-11 2z" fill="#f8e8c8"/><path d="M7 8l6-1M7 11l6-1M8 14l5-1" stroke="#a85"/><path d="M19 1L13 13" stroke="#a83010" stroke-width="2"/>`],
    ["open", q],
  ];
  document.getElementById("taskIcons").innerHTML = task.map(([cls, art]) =>
    `<span class="task-ico ${cls}"><svg width="22" height="22" viewBox="0 0 22 22">${art}</svg></span>`).join("");

  document.getElementById("trayIcons").innerHTML = `
    <svg width="12" height="8" viewBox="0 0 12 8"><path d="M1 7l5-6 5 6" fill="none" stroke="#fff"/></svg>
    <svg width="16" height="12" viewBox="0 0 16 12"><path d="M4.500 1.500h11v9h-11z" fill="none" stroke="#fff"/><path d="M6 3h6v6H6zM0 4h4M0 8h4" fill="#fff" stroke="#fff"/></svg>
    <svg width="14" height="13" viewBox="0 0 14 13" fill="none" stroke="#aaa"><path d="M1 7c3-6 9-7 12-6M3 9c2-3 5-4 9-3M5 11c1-2 3-2 5-1"/><circle cx="8" cy="12" r="1" fill="#fff"/></svg>
    <svg width="14" height="13" viewBox="0 0 14 13" fill="none" stroke="#fff"><path d="M1 4h3l3-3v11L4 9H1z"/><path d="M9 4c1 1 1 4 0 5M11 2c2 2 2 7 0 9"/></svg>
    <span class="tray-char">英</span>
    <svg width="16" height="16" viewBox="0 0 16 16"><rect width="16" height="16" rx="3" fill="#e2401a"/><path d="M12 4.500C9 3 5 3.500 5 5.800s6 2 6 4.500-4 2.700-7 1.300" fill="none" stroke="#fff" stroke-width="2"/></svg>`;
</script>
</body>
</html>
